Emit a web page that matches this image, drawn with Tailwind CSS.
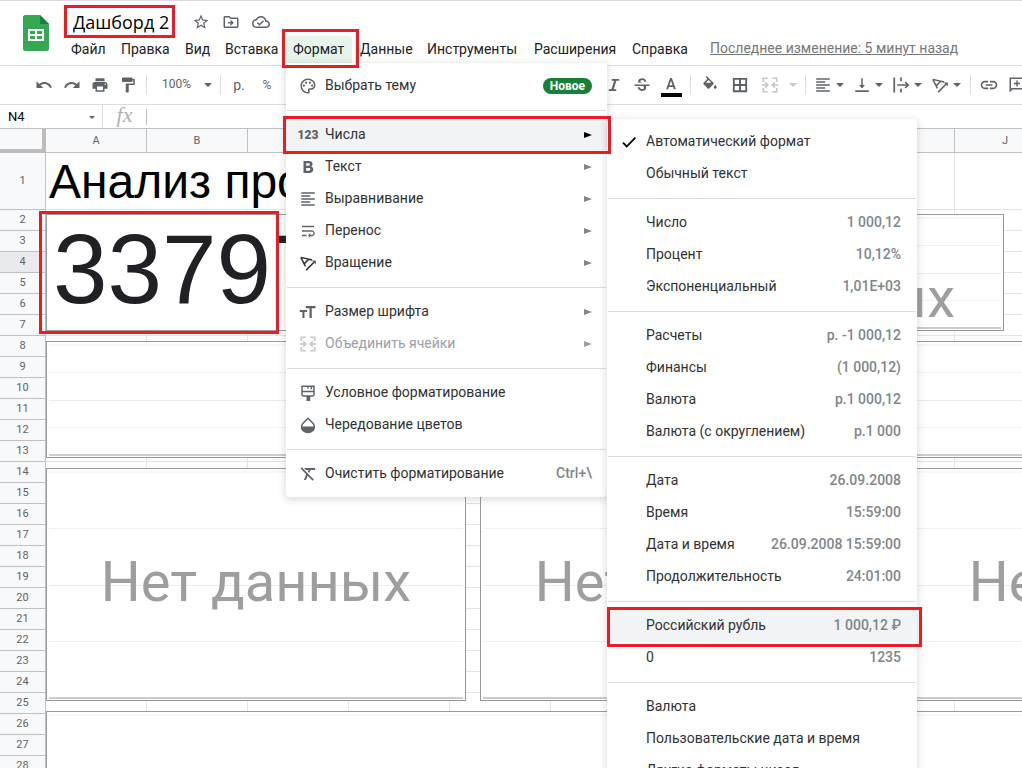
<!DOCTYPE html>
<html lang="ru">
<head>
<meta charset="utf-8">
<title>Дашборд 2</title>
<script src="https://cdn.jsdelivr.net/npm/@tailwindcss/browser@4"></script>
</head>
<body class="relative flex h-screen flex-col overflow-hidden bg-white font-['Roboto',sans-serif] text-sm text-[#202124]">

<svg class="hidden">
  <defs>
    <symbol id="i-undo" viewBox="0 0 24 24"><path d="M12.5 8c-2.65 0-5.05.99-6.9 2.6L2 7v9h9l-3.62-3.62c1.39-1.16 3.16-1.88 5.12-1.88 3.54 0 6.55 2.31 7.6 5.5l2.37-.78C21.08 11.03 17.15 8 12.5 8z"/></symbol>
    <symbol id="i-redo" viewBox="0 0 24 24"><path d="M18.4 10.6C16.55 8.99 14.15 8 11.5 8c-4.65 0-8.58 3.03-9.96 7.22L3.9 16c1.05-3.19 4.05-5.5 7.6-5.5 1.95 0 3.73.72 5.12 1.88L13 16h9V7l-3.6 3.6z"/></symbol>
    <symbol id="i-print" viewBox="0 0 24 24"><path d="M19 8H5c-1.66 0-3 1.34-3 3v6h4v4h12v-4h4v-6c0-1.66-1.34-3-3-3zm-3 11H8v-5h8v5zm3-7c-.55 0-1-.45-1-1s.45-1 1-1 1 .45 1 1-.45 1-1 1zm-1-9H6v4h12V3z"/></symbol>
    <symbol id="i-paint" viewBox="0 0 24 24"><path d="M18 4V3c0-.55-.45-1-1-1H5c-.55 0-1 .45-1 1v4c0 .55.45 1 1 1h12c.55 0 1-.45 1-1V6h1v4H9v11c0 .55.45 1 1 1h2c.55 0 1-.45 1-1v-9h8V4h-3z"/></symbol>
    <symbol id="i-italic" viewBox="0 0 24 24"><path d="M9 4v2.400h3.200L8.600 17.600H5V20h10v-2.400h-3.400L15.200 6.400H19V4z"/></symbol>
    <symbol id="i-strike" viewBox="0 0 24 24"><path d="M6.850 7.080C6.850 4.370 9.450 3 12.240 3c1.640 0 3 .490 3.900 1.280.770.650 1.460 1.730 1.460 3.240h-2.800c0-.310-.050-.590-.150-.850-.290-.860-1.200-1.280-2.400-1.280-1.860 0-2.340 1.020-2.340 1.700 0 .480.250.880.740 1.210.380.250.770.480 1.410.700H7.390c-.210-.340-.540-.890-.540-1.920zM22 11.200H2v2.200h10.600c1.150.450 1.960.900 1.960 2.100 0 1-.810 1.900-2.280 1.900-1.540 0-2.930-.700-2.930-2.500H6.400c0 .550.080 1.130.240 1.580.81 2.290 3.290 3.500 5.670 3.500 2.270 0 5.300-1.100 5.300-4.200 0-.300-.010-1.600-.480-2.380H22z"/></symbol>
    <symbol id="i-color" viewBox="0 0 24 24"><path d="M10.700 1.500L4.700 18.500h3l1.200-3.500h6.200l1.200 3.500h3L13.300 1.500zm-1 11L12 5.500l2.300 7z"/></symbol>
    <symbol id="i-fill" viewBox="0 0 24 24"><path fill-rule="evenodd" d="M16.560 8.940L7.620 0 6.210 1.410l2.380 2.380-5.150 5.150c-.590.590-.590 1.540 0 2.120l5.500 5.500c.290.290.680.440 1.060.440s.770-.150 1.060-.440l5.500-5.500c.590-.580.590-1.530 0-2.120zM6.500 9L10 5.300 13.700 9zM19 11.500s-2 2.170-2 3.500c0 1.100.900 2 2 2s2-.900 2-2c0-1.330-2-3.500-2-3.500z"/></symbol>
    <symbol id="i-borders" viewBox="0 0 24 24"><path d="M2.500 2.500v19h19v-19zm8.200 16.500H5v-5.700h5.700zm0-8.300H5V5h5.700zm8.300 8.300h-5.700v-5.700H19zm0-8.300h-5.700V5H19z"/></symbol>
    <symbol id="i-merge" viewBox="0 0 24 24"><path fill="none" stroke="currentColor" stroke-width="2.200" d="M3 8V3h6M15 3h6v5M3 16v5h6M15 21h6v-5M1 12h7M5.500 8.500L9 12l-3.500 3.500M23 12h-7M18.500 8.500L15 12l3.500 3.500"/></symbol>
    <symbol id="i-align" viewBox="0 0 24 24"><path d="M15 15H3v2h12v-2zm0-8H3v2h12V7zM3 13h18v-2H3v2zm0 8h18v-2H3v2zM3 3v2h18V3H3z"/></symbol>
    <symbol id="i-bottom" viewBox="0 0 24 24"><path d="M16 12h-3V3h-2v9H8l4 4.500 4-4.500zM3 19v2.200h18V19z"/></symbol>
    <symbol id="i-over" viewBox="0 0 24 24"><path fill="none" stroke="currentColor" stroke-width="2.300" d="M3 2v20M12 2v5M12 17v5M7 12h14M17.500 8l4 4-4 4"/></symbol>
    <symbol id="i-rotate" viewBox="0 0 24 24"><path fill="none" stroke="currentColor" stroke-width="2" d="M2.500 4.500l15 3.500M2.500 4.500L8.500 16.500M7.500 12.500L13 7M9.500 21.500L21 10"/><path d="M22.500 8.500v5.500l-5.500-5.500z"/></symbol>
    <symbol id="i-link" viewBox="0 0 24 24"><path d="M3.900 12c0-1.710 1.390-3.100 3.100-3.100h4V7H7c-2.760 0-5 2.240-5 5s2.240 5 5 5h4v-1.900H7c-1.710 0-3.100-1.390-3.100-3.100zM8 13h8v-2H8v2zm9-6h-4v1.900h4c1.710 0 3.100 1.390 3.100 3.100s-1.390 3.100-3.100 3.100h-4V17h4c2.760 0 5-2.240 5-5s-2.240-5-5-5z"/></symbol>
    <symbol id="i-comment" viewBox="0 0 24 24"><path fill-rule="evenodd" d="M2 2h20v16H6l-4 4zM4 4v13l1-1h15V4zM11 6h2v3h3v2h-3v3h-2v-3H8V9h3z"/></symbol>
    <symbol id="i-palette" viewBox="0 0 24 24"><path d="M12 22C6.490 22 2 17.510 2 12S6.490 2 12 2s10 4.040 10 9c0 3.310-2.690 6-6 6h-1.770c-.280 0-.500.220-.500.500 0 .120.050.230.130.330.410.470.640 1.060.640 1.670A2.500 2.500 0 0 1 12 22zm0-18c-4.410 0-8 3.590-8 8s3.590 8 8 8c.280 0 .500-.220.500-.500a.540.540 0 0 0-.140-.350c-.410-.460-.630-1.050-.630-1.650a2.500 2.500 0 0 1 2.500-2.500H16c2.210 0 4-1.790 4-4 0-3.860-3.590-7-8-7z"/><circle cx="6.500" cy="11.500" r="1.400"/><circle cx="9.500" cy="7.500" r="1.400"/><circle cx="14.500" cy="7.500" r="1.400"/><circle cx="17.500" cy="11.500" r="1.400"/></symbol>
    <symbol id="i-bold" viewBox="0 0 24 24"><path fill-rule="evenodd" d="M6 4h7.500c2.800 0 4.600 1.600 4.600 4 0 1.600-.800 2.700-1.900 3.400 1.700.600 2.800 1.900 2.800 3.900 0 2.900-2.100 4.700-5.300 4.700H6zM9.500 7v3.200h3.200c1.200 0 1.800-.600 1.800-1.600S13.900 7 12.700 7zM9.500 13.200V17h3.600c1.300 0 2.100-.700 2.100-1.900s-.800-1.900-2.100-1.900z"/></symbol>
    <symbol id="i-wrap" viewBox="0 0 24 24"><path d="M4 19h6v-2H4v2zM20 5H4v2h16V5zm-3 6H4v2h13.250c1.100 0 2 .900 2 2s-.900 2-2 2H15v-2l-3 3 3 3v-2h2c2.210 0 4-1.790 4-4s-1.790-4-4-4z"/></symbol>
    <symbol id="i-size" viewBox="0 0 24 24"><path d="M9 4v3h5v13h3V7h5V4H9zM1 12h3.500v8h2.800v-8h3.500V9.300H1z"/></symbol>
    <symbol id="i-cond" viewBox="0 0 24 24"><path fill-rule="evenodd" d="M4 2h17v12c0 1.700-1.300 3-3 3h-3v5.500h-5V17H6c-1.700 0-3-1.300-3-3V3c0-.600.400-1 1-1zm1 2v5h14V4h-1.500v3h-2V4H13v2h-2V4zm0 7v3c0 .600.400 1 1 1h12c.600 0 1-.400 1-1v-3z"/></symbol>
    <symbol id="i-drop" viewBox="0 0 24 24"><path fill-rule="evenodd" d="M12 1.500l6.700 6.700c3.700 3.700 3.700 9 .2 12.100-3.900 3.400-9.900 3.400-13.800 0-3.500-3.100-3.500-8.400.2-12.100zM12 4.400L6.800 9.600C5.300 11 4.700 12.500 4.600 14h14.800c-.1-1.500-.7-3-2.200-4.400z"/></symbol>
    <symbol id="i-clear" viewBox="0 0 24 24"><path d="M21.500 6.500V4H6.600l2.500 2.500h3.700l-1 2.400 1.800 1.800 1.800-4.200zM3.600 3.100L2 4.700l7.600 7.600L6.500 20h2.800l2.300-5.600 6.600 6.600 1.600-1.600z"/></symbol>
    <symbol id="i-check" viewBox="0 0 24 24"><path d="M9 16.170L4.830 12l-1.800 1.800L9 19.600 21.300 7l-1.700-1.700z"/></symbol>
    <symbol id="i-star" viewBox="0 0 24 24"><path d="M22 9.240l-7.190-.620L12 2 9.190 8.630 2 9.240l5.460 4.730L5.820 21 12 17.270 18.180 21l-1.630-7.030L22 9.240zM12 15.400l-3.760 2.270 1-4.280-3.320-2.880 4.380-.380L12 6.100l1.710 4.040 4.380.380-3.320 2.880 1 4.280L12 15.400z"/></symbol>
    <symbol id="i-move" viewBox="0 0 24 24"><path d="M20 6h-8l-2-2H4c-1.100 0-2 .900-2 2v12c0 1.100.900 2 2 2h16c1.100 0 2-.900 2-2V8c0-1.100-.900-2-2-2zm0 12H4V6h5.170l2 2H20v10zM12 9.200l-1.300 1.300 1.500 1.500H8v2h4.200l-1.500 1.500 1.300 1.300 3.800-3.800z"/></symbol>
    <symbol id="i-cloud" viewBox="0 0 24 24"><path d="M19.350 10.040C18.670 6.590 15.640 4 12 4 9.110 4 6.600 5.640 5.350 8.040 2.340 8.360 0 10.910 0 14c0 3.310 2.690 6 6 6h13c2.760 0 5-2.240 5-5 0-2.640-2.050-4.780-4.650-4.960zM19 18H6c-2.210 0-4-1.790-4-4 0-2.050 1.530-3.760 3.560-3.970l1.070-.110.500-.950C8.080 7.140 9.940 6 12 6c2.620 0 4.880 1.860 5.390 4.430l.300 1.500 1.530.110c1.560.100 2.780 1.410 2.780 2.960 0 1.650-1.350 3-3 3zm-9-3.820l-2.090-2.090L6.500 13.500 10 17l6.010-6.010-1.410-1.410z"/></symbol>
    <symbol id="i-down" viewBox="0 0 8 4"><path d="M0 0h8L4 4z"/></symbol>
    <symbol id="i-right" viewBox="0 0 8 8"><path d="M0 1l8 3-8 3z"/></symbol>
  </defs>
</svg>

<header class="flex h-[66px] shrink-0 border-y border-[#dadce0]">
  <a href="#" aria-label="Таблицы" class="mt-[14px] ml-[23px] block w-[26px] shrink-0">
    <svg class="h-9 w-[26px]" viewBox="0 0 26 36"><path fill="#34a853" d="M2.500 0H17l9 9v24.500a2.500 2.500 0 0 1-2.500 2.500h-21A2.500 2.500 0 0 1 0 33.500v-31A2.500 2.500 0 0 1 2.500 0z"/><path fill="#188038" d="M17 0l9 9h-9z"/><path fill="#fff" fill-rule="evenodd" d="M5 14h16v12H5zm2 2v3h5v-3zm7 0v3h5v-3zm-7 5v3h5v-3zm7 0v3h5v-3z"/></svg>
  </a>
  <div class="ml-[15px] min-w-0 flex-1">
    <div class="flex h-[35px] items-center pt-[7px]">
      <input aria-label="Название" value="Дашборд 2" class="ml-[9px] w-[119px] bg-transparent font-['Open_Sans',sans-serif] text-lg text-black outline-none">
      <div class="flex gap-3 fill-[#5f6368]">
        <button aria-label="Пометить" class="size-[18px]"><svg class="size-[18px]"><use href="#i-star"/></svg></button>
        <button aria-label="Переместить" class="size-[18px]"><svg class="size-[18px]"><use href="#i-move"/></svg></button>
        <button aria-label="Сохранено на Диске" class="size-[18px]"><svg class="size-[18px]"><use href="#i-cloud"/></svg></button>
      </div>
    </div>
    <nav class="flex items-center whitespace-nowrap">
      <div class="grid h-[27px] grid-cols-[50px_64px_40px_68px_67px_67px_107px_98px_72px] text-[#202124]">
        <button class="pb-[2px] pl-[7px] text-left">Файл</button>
        <button class="pb-[2px] pl-[7px] text-left">Правка</button>
        <button class="pb-[2px] pl-[7px] text-left">Вид</button>
        <button class="pb-[2px] pl-[7px] text-left">Вставка</button>
        <button class="mr-px rounded-t bg-[#e6f4ea] pb-[2px] pl-[7px] text-left">Формат</button>
        <button class="pb-[2px] pl-[7px] text-left">Данные</button>
        <button class="pb-[2px] pl-[7px] text-left">Инструменты</button>
        <button class="pb-[2px] pl-[7px] text-left">Расширения</button>
        <button class="pb-[2px] pl-[7px] text-left">Справка</button>
      </div>
      <a href="#" class="ml-[13px] pb-[3px] text-[#777] underline">Последнее изменение: 5 минут назад</a>
    </nav>
  </div>
</header>

<div role="toolbar" class="flex h-[39px] shrink-0 items-center border-b border-[#dadce0] fill-[#5f6368] pl-[30px] text-xs text-[#5f6368]">
  <button aria-label="Отменить" class="grid w-7 shrink-0 place-items-center"><svg class="size-[18px]"><use href="#i-undo"/></svg></button>
  <button aria-label="Повторить" class="grid w-7 shrink-0 place-items-center"><svg class="size-[18px]"><use href="#i-redo"/></svg></button>
  <button aria-label="Печать" class="grid w-7 shrink-0 place-items-center"><svg class="size-[18px]"><use href="#i-print"/></svg></button>
  <button aria-label="Копировать форматирование" class="grid w-7 shrink-0 place-items-center"><svg class="size-[18px]"><use href="#i-paint"/></svg></button>
  <span class="ml-1 h-5 w-px shrink-0 bg-[#dadce0]"></span>
  <button class="flex w-[73px] shrink-0 items-center justify-between pr-[8px] pl-[15px]"><span class="pb-[2px]">100%</span><svg class="h-1 w-2"><use href="#i-down"/></svg></button>
  <span class="h-5 w-px shrink-0 bg-[#dadce0]"></span>
  <button class="ml-1 w-7 shrink-0 text-sm">р.</button>
  <button class="w-7 shrink-0">%</button>
  <span class="w-[319px] shrink-0"></span>
  <button aria-label="Курсив" class="grid w-7 shrink-0 place-items-center"><svg class="size-[18px]"><use href="#i-italic"/></svg></button>
  <button aria-label="Зачеркнутый" class="grid w-7 shrink-0 place-items-center"><svg class="size-[18px]"><use href="#i-strike"/></svg></button>
  <button aria-label="Цвет текста" class="flex w-[30px] shrink-0 flex-col items-center pt-1"><svg class="h-4 w-[18px]"><use href="#i-color"/></svg><span class="h-1 w-[21px] bg-black"></span></button>
  <span class="ml-1 h-5 w-px shrink-0 bg-[#dadce0]"></span>
  <button aria-label="Цвет заливки" class="ml-1 grid w-[30px] shrink-0 place-items-center"><svg class="size-[18px]"><use href="#i-fill"/></svg></button>
  <button aria-label="Границы" class="grid w-[30px] shrink-0 place-items-center"><svg class="size-[18px]"><use href="#i-borders"/></svg></button>
  <button aria-label="Объединить" class="grid w-[30px] shrink-0 place-items-center text-[#c4c6c8]"><svg class="size-[18px]"><use href="#i-merge"/></svg></button>
  <button aria-label="Виды объединения" class="grid w-4 shrink-0 place-items-center"><svg class="h-1 w-2 fill-[#c4c6c8]"><use href="#i-down"/></svg></button>
  <span class="ml-1 h-5 w-px shrink-0 bg-[#dadce0]"></span>
  <button aria-label="Выравнивание по горизонтали" class="ml-[3px] flex w-[39px] shrink-0 items-center justify-center gap-1"><svg class="size-[18px]"><use href="#i-align"/></svg><svg class="h-1 w-2"><use href="#i-down"/></svg></button>
  <button aria-label="Выравнивание по вертикали" class="flex w-[39px] shrink-0 items-center justify-center gap-1"><svg class="size-[18px]"><use href="#i-bottom"/></svg><svg class="h-1 w-2"><use href="#i-down"/></svg></button>
  <button aria-label="Перенос текста" class="flex w-[39px] shrink-0 items-center justify-center gap-1"><svg class="size-[18px]"><use href="#i-over"/></svg><svg class="h-1 w-2"><use href="#i-down"/></svg></button>
  <button aria-label="Поворот текста" class="flex w-[39px] shrink-0 items-center justify-center gap-1"><svg class="size-[18px]"><use href="#i-rotate"/></svg><svg class="h-1 w-2"><use href="#i-down"/></svg></button>
  <span class="ml-[5px] h-5 w-px shrink-0 bg-[#dadce0]"></span>
  <button aria-label="Вставить ссылку" class="ml-1 grid w-7 shrink-0 place-items-center"><svg class="size-5"><use href="#i-link"/></svg></button>
  <button aria-label="Комментарий" class="grid w-7 shrink-0 place-items-center"><svg class="size-[18px]"><use href="#i-comment"/></svg></button>
</div>

<div class="flex h-6 shrink-0 items-center border-b border-[#c0c0c0]">
  <button aria-label="Имя диапазона" class="flex h-full w-[103px] items-center justify-between border-r border-[#dadce0] pt-px pr-[7px] pl-2 text-[13px] text-black">N4<svg class="h-[3px] w-[6px] fill-[#5f6368]"><use href="#i-down"/></svg></button>
  <span class="w-[43px] pb-[3px] text-center font-['Liberation_Serif',serif] text-[22px] leading-5 text-[#b0b0b0] italic">fx</span>
  <input aria-label="Формула" class="h-4 flex-1 border-l border-[#c0c0c0] px-2 outline-none">
</div>

<main class="relative min-h-0 flex-1 overflow-hidden">
  <table class="w-[1056px] table-fixed border-separate border-spacing-0 text-[11px] text-[#5f6368]">
    <thead>
      <tr id="cols" class="h-6"><th class="w-[46px] border-r-4 border-b-4 border-[#bdbdbd] bg-[#f8f9fa]"></th></tr>
    </thead>
    <tbody id="rows"></tbody>
  </table>

  <section class="absolute top-[85px] left-[46px] flex h-[117px] w-[536px] items-center border border-[#999] bg-white pb-2 pl-[6px] font-['Liberation_Sans',Arial,sans-serif] text-[98px] leading-none text-[#202124]">33797</section>
  <section data-chart class="absolute top-[85px] left-[596px] flex h-[117px] w-[408px] flex-col border border-[#999] bg-white px-[2px] pt-[2px] pb-px"><p class="absolute inset-0 flex items-end justify-center pb-1 text-[56px] leading-none text-[#9e9e9e]">Нет данных</p></section>
  <section data-chart class="absolute top-[212px] -right-8 left-[46px] flex h-[117px] flex-col border border-[#999] bg-white px-[2px] pt-[2px] pb-px"></section>
  <section data-chart class="absolute top-[339px] left-[46px] flex h-[233px] w-[420px] flex-col border border-[#999] bg-white px-[2px] pt-[2px] pb-px"><p class="absolute inset-0 flex items-center justify-center pb-[6px] text-[56px] leading-none text-[#9e9e9e]">Нет данных</p></section>
  <section data-chart class="absolute top-[339px] left-[480px] flex h-[233px] w-[420px] flex-col border border-[#999] bg-white px-[2px] pt-[2px] pb-px"><p class="absolute inset-0 flex items-center justify-center pb-[6px] text-[56px] leading-none text-[#9e9e9e]">Нет данных</p></section>
  <section data-chart class="absolute top-[339px] left-[914px] flex h-[233px] w-[420px] flex-col border border-[#999] bg-white px-[2px] pt-[2px] pb-px"><p class="absolute inset-0 flex items-center justify-center pb-[6px] text-[56px] leading-none text-[#9e9e9e]">Нет данных</p></section>
  <section data-chart class="absolute top-[582px] -right-8 left-[46px] flex h-[400px] flex-col border border-[#999] bg-white px-[2px] pt-[2px] pb-px"></section>
</main>

<div id="menu" role="menu" aria-label="Формат" class="absolute top-[63px] left-[286px] w-[321px] rounded-b bg-white fill-[#5f6368] pt-[7px] pb-[7px] text-[#303134] shadow-[0_2px_6px_2px_rgba(60,64,67,0.15)]"></div>
<div id="submenu" role="menu" aria-label="Числа" class="absolute top-[119px] left-[607px] w-[310px] rounded bg-white pt-[7px] pb-[7px] text-[#303134] shadow-[0_2px_6px_2px_rgba(60,64,67,0.15)]"></div>

<div class="pointer-events-none absolute top-[5px] left-16 h-[33px] w-[111px] border-3 border-[#ed1c24]"></div>
<div class="pointer-events-none absolute top-[29px] left-[282px] h-[39px] w-[77px] border-3 border-[#ed1c24]"></div>
<div class="pointer-events-none absolute top-[116px] left-[283px] h-[38px] w-[328px] border-3 border-[#ed1c24]"></div>
<div class="pointer-events-none absolute top-[211px] left-[39px] h-[123px] w-[240px] border-3 border-[#ed1c24]"></div>
<div class="pointer-events-none absolute top-[607px] left-[607px] h-10 w-[315px] border-3 border-[#ed1c24]"></div>

<script>
  document.getElementById('cols').insertAdjacentHTML('beforeend', [...'ABCDEFGHIJ'].map(c =>
    `<th class="border-r border-b border-[#c0c0c0] bg-[#f8f9fa] p-0 font-normal">${c}</th>`).join(''));

  const cell = '<td class="border-r border-b border-[#e2e3e3] p-0"></td>';
  let rows = '';
  for (let n = 1; n <= 28; n++) {
    const head = n === 4
      ? `<th class="border-r border-b border-[#c0c0c0] bg-[#e8eaed] p-0 pb-px font-normal leading-4">${n}</th>`
      : `<th class="border-r border-b border-[#c0c0c0] bg-[#f8f9fa] p-0 pb-px font-normal leading-4">${n}</th>`;
    rows += n === 1
      ? `<tr class="h-[57px]">${head}<td colspan="4" class="overflow-hidden border-r border-b border-[#e2e3e3] p-0 pt-[2px] pl-[3px] font-['Liberation_Sans',Arial,sans-serif] text-5xl leading-none whitespace-nowrap text-black">Анализ продаж</td>${cell.repeat(6)}</tr>`
      : `<tr class="h-[21px]">${head}${cell.repeat(10)}</tr>`;
  }
  document.getElementById('rows').innerHTML = rows;

  document.querySelectorAll('[data-chart]').forEach(c => c.insertAdjacentHTML('afterbegin',
    '<div class="flex-1 border-t-2 border-[#f6f6f6]"></div><div class="flex-1 border-t border-[#efefef]"></div><div class="flex-1 border-t border-[#ebebeb]"></div><div class="flex-1 border-t border-b-2 border-t-[#efefef] border-b-[#ccc]"></div>'));

  const sep = '<div role="separator" class="mx-px my-2 h-px bg-[#dadce0]"></div>';
  const icon = id => `<svg class="size-[18px]"><use href="#i-${id}"/></svg>`;
  const arrow = '<svg class="size-2 fill-[#80868b]"><use href="#i-right"/></svg>';
  const item = (ic, label, end = arrow) =>
    `<button role="menuitem" class="flex h-8 w-full items-center pr-[15px] pl-[13px] text-left"><span class="mr-2 grid w-[18px] shrink-0 place-items-center">${ic}</span><span class="flex-1 pb-[3px]">${label}</span>${end}</button>`;
  document.getElementById('menu').innerHTML =
    item(icon('palette'), 'Выбрать тему', '<span class="rounded-full bg-[#188038] px-[7px] text-xs leading-4 font-bold text-white">Новое</span>') + sep +
    '<button role="menuitem" class="flex h-8 w-full items-center bg-[#f1f3f4] pr-[15px] pl-[13px] text-left"><span class="mr-2 flex w-[18px] shrink-0 justify-center text-xs font-black text-[#5f6368]">123</span><span class="flex-1 pb-[3px]">Числа</span><svg class="size-2 fill-black"><use href="#i-right"/></svg></button>' +
    item(icon('bold'), 'Текст') + item(icon('align'), 'Выравнивание') + item(icon('wrap'), 'Перенос') + item(icon('rotate'), 'Вращение') + sep +
    item(icon('size'), 'Размер шрифта') +
    '<button role="menuitem" disabled class="flex h-8 w-full items-center pr-[15px] pl-[13px] text-left text-[#9aa0a6]"><span class="mr-2 grid w-[18px] shrink-0 place-items-center text-[#c4c6c8]"><svg class="size-[18px]"><use href="#i-merge"/></svg></span><span class="flex-1 pb-[3px]">Объединить ячейки</span><svg class="size-2 fill-[#9aa0a6]"><use href="#i-right"/></svg></button>' + sep +
    item(icon('cond'), 'Условное форматирование', '') + item(icon('drop'), 'Чередование цветов', '') + sep +
    item(icon('clear'), 'Очистить форматирование', '<span class="pb-[3px] font-medium text-[#80868b]">Ctrl+\\</span>');

  const fmt = (label, value = '') =>
    `<button role="menuitem" class="flex h-8 w-full items-center justify-between pr-4 pb-[3px] pl-[39px] text-left"><span>${label}</span><span class="font-medium text-[#80868b]">${value}</span></button>`;
  document.getElementById('submenu').innerHTML =
    '<button role="menuitemradio" aria-checked="true" class="flex h-8 w-full items-center pl-[13px] text-left"><svg class="mr-2 size-[18px] fill-black"><use href="#i-check"/></svg><span class="pb-[3px]">Автоматический формат</span></button>' +
    fmt('Обычный текст') + sep +
    fmt('Число', '1 000,12') + fmt('Процент', '10,12%') + fmt('Экспоненциальный', '1,01E+03') + sep +
    fmt('Расчеты', 'р. -1 000,12') + fmt('Финансы', '(1 000,12)') + fmt('Валюта', 'р.1 000,12') + fmt('Валюта (с округлением)', 'р.1 000') + sep +
    fmt('Дата', '26.09.2008') + fmt('Время', '15:59:00') + fmt('Дата и время', '26.09.2008 15:59:00') + fmt('Продолжительность', '24:01:00') + sep +
    '<button role="menuitem" class="flex h-8 w-full items-center justify-between bg-[#f1f3f4] pr-4 pb-[3px] pl-[39px] text-left"><span>Российский рубль</span><span class="font-medium text-[#80868b]">1 000,12 ₽</span></button>' +
    fmt('0', '1235') + sep +
    fmt('Валюта') + fmt('Пользовательские дата и время') + fmt('Другие форматы чисел');
</script>
</body>
</html>
